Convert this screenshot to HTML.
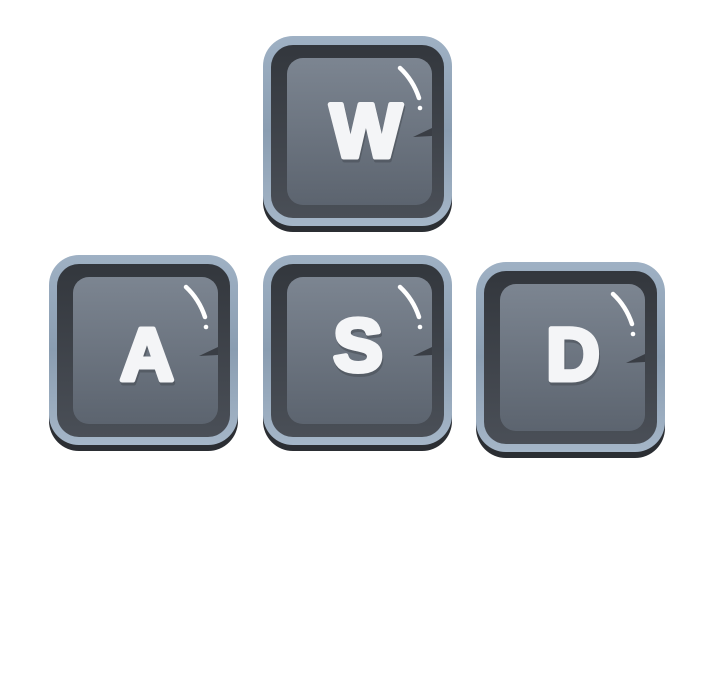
<!DOCTYPE html>
<html><head><style>
html,body{margin:0;padding:0;background:#fff;width:711px;height:680px;overflow:hidden}
svg{display:block}
text{font-family:"Liberation Sans",sans-serif;font-weight:bold;stroke-width:5;stroke-linejoin:round;text-anchor:middle}
.sh{fill:#4a5058;stroke:#4a5058;opacity:.6}
.lt{fill:#f4f5f7;stroke:#f4f5f7}
</style></head><body>
<svg width="711" height="680" viewBox="0 0 711 680">
<defs>
<linearGradient id="fr" x1="0" y1="0" x2="0" y2="1">
<stop offset="0" stop-color="#9fb1c4"/><stop offset="0.5" stop-color="#8a9db1"/><stop offset="1" stop-color="#a5b6c8"/></linearGradient>
<linearGradient id="ring" x1="0" y1="0" x2="0" y2="1">
<stop offset="0" stop-color="#33373d"/><stop offset="1" stop-color="#4a4f57"/></linearGradient>
<linearGradient id="face" x1="0" y1="0" x2="0" y2="1">
<stop offset="0" stop-color="#7c8591"/><stop offset="1" stop-color="#5c646f"/></linearGradient>
<g id="key">
<rect x="0" y="6" width="189" height="190" rx="30" fill="#2b2e33"/>
<rect x="0" y="0" width="189" height="190" rx="30" fill="url(#fr)"/>
<rect x="8" y="9" width="173" height="173" rx="22" fill="url(#ring)"/>
<rect x="24" y="22" width="145" height="147" rx="16" fill="url(#face)"/>
<path d="M169 92 L150 101 L169 100 Z" fill="#3a3e45"/>
<path d="M137 32 Q150 44 156 62" stroke="#fff" stroke-width="4.5" fill="none" stroke-linecap="round"/>
<circle cx="157" cy="72" r="2.3" fill="#fff"/>
</g>
</defs>
<use href="#key" x="263" y="36"/>
<use href="#key" x="49" y="255"/>
<use href="#key" x="263" y="255"/>
<use href="#key" x="476" y="262"/>
<text class="sh" x="367" y="160" font-size="76">W</text>
<text class="sh" x="148" y="383" font-size="74">A</text>
<text class="sh" x="359" y="374" font-size="74">S</text>
<text class="sh" x="574" y="383" font-size="74">D</text>
<text class="lt" x="366" y="157" font-size="76">W</text>
<text class="lt" x="147" y="380" font-size="74">A</text>
<text class="lt" x="358" y="371" font-size="74">S</text>
<text class="lt" x="573" y="380" font-size="74">D</text>
</svg>
</body></html>
